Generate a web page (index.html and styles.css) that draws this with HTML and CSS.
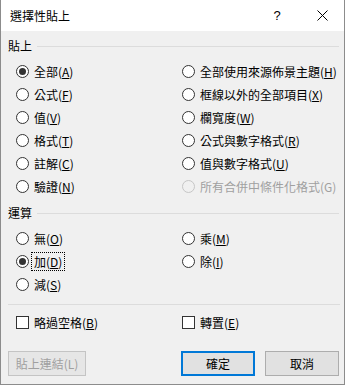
FILE: index.html
```html
<!DOCTYPE html>
<html lang="zh-TW">
<head>
    <meta charset="UTF-8">
    <meta name="viewport" content="width=device-width, initial-scale=1.0">
    <title>選擇性貼上</title>
    <link rel="stylesheet" href="styles.css">
</head>
<body>
    <div class="dialog">
        <div class="titlebar">
            <span class="title">選擇性貼上</span>
            <span class="cap help">?</span>
            <span class="cap close">
                <svg width="11" height="11" viewBox="0 0 11 11"><path d="M0.5 0.5L10.5 10.5M10.5 0.5L0.5 10.5" stroke="#000" stroke-width="1"/></svg>
            </span>
        </div>

        <div class="body">
            <div class="group-head"><span>貼上</span><span class="rule"></span></div>
            <div class="options paste">
                <label class="opt"><span class="radio checked"></span>全部(<u>A</u>)</label>
                <label class="opt"><span class="radio"></span>全部使用來源佈景主題(<u>H</u>)</label>
                <label class="opt"><span class="radio"></span>公式(<u>F</u>)</label>
                <label class="opt"><span class="radio"></span>框線以外的全部項目(<u>X</u>)</label>
                <label class="opt"><span class="radio"></span>值(<u>V</u>)</label>
                <label class="opt"><span class="radio"></span>欄寬度(<u>W</u>)</label>
                <label class="opt"><span class="radio"></span>格式(<u>T</u>)</label>
                <label class="opt"><span class="radio"></span>公式與數字格式(<u>R</u>)</label>
                <label class="opt"><span class="radio"></span>註解(<u>C</u>)</label>
                <label class="opt"><span class="radio"></span>值與數字格式(<u>U</u>)</label>
                <label class="opt"><span class="radio"></span>驗證(<u>N</u>)</label>
                <label class="opt disabled"><span class="radio"></span>所有合併中條件化格式(G)</label>
            </div>

            <div class="group-head ops-head"><span>運算</span><span class="rule"></span></div>
            <div class="options ops">
                <label class="opt"><span class="radio"></span>無(<u>O</u>)</label>
                <label class="opt"><span class="radio"></span>乘(<u>M</u>)</label>
                <label class="opt"><span class="radio checked"></span><span class="focus">加(<u>D</u>)</span></label>
                <label class="opt"><span class="radio"></span>除(<u>I</u>)</label>
                <label class="opt"><span class="radio"></span>減(<u>S</u>)</label>
            </div>

            <div class="separator"></div>

            <div class="options checks">
                <label class="opt"><span class="check"></span>略過空格(<u>B</u>)</label>
                <label class="opt"><span class="check"></span>轉置(<u>E</u>)</label>
            </div>

            <div class="buttons">
                <button class="btn link" disabled>貼上連結(L)</button>
                <button class="btn ok">確定</button>
                <button class="btn">取消</button>
            </div>
        </div>
    </div>
</body>
</html>
```

FILE: styles.css
```css
body {
    margin: 0;
    background-color: #fff;
    font-family: "Noto Sans CJK TC", "Noto Sans", sans-serif;
    font-size: 12px;
    color: #000;
}
.dialog {
    width: 345px;
    height: 385px;
    box-sizing: border-box;
    border: 1px solid #8c8c8c;
    border-top: none;
    background-color: #f0f0f0;
}
.titlebar {
    display: flex;
    align-items: center;
    height: 31px;
    background-color: #fff;
    padding-left: 9px;
}
.title {
    flex: 1;
}
.cap {
    display: flex;
    justify-content: center;
    align-items: center;
    height: 31px;
}
.help {
    width: 46px;
    font-family: "Liberation Sans", sans-serif;
    font-size: 13px;
}
.close {
    width: 44px;
}
.close svg {
    display: block;
}
.body {
    padding: 8px 5px 0 7px;
}
.group-head {
    display: flex;
    align-items: center;
    height: 14px;
    line-height: 14px;
}
.rule {
    flex: 1;
    height: 1px;
    margin-left: 5px;
    margin-top: 1px;
    background-color: #dcdcdc;
}
.options {
    display: grid;
    grid-template-columns: 166px 1fr;
    grid-auto-rows: 23px;
    padding-left: 8px;
}
.paste {
    margin-top: 7px;
}
.ops-head {
    margin-top: 8px;
}
.ops {
    margin-top: 7px;
}
.opt {
    display: flex;
    align-items: center;
    white-space: nowrap;
}
.radio {
    width: 13px;
    height: 13px;
    box-sizing: border-box;
    border: 1px solid #333;
    border-radius: 50%;
    background-color: #fff;
    margin-right: 5px;
    display: flex;
    justify-content: center;
    align-items: center;
}
.radio.checked::after {
    content: "";
    width: 7px;
    height: 7px;
    border-radius: 50%;
    background-color: #333;
}
.disabled {
    color: #a0a0a0;
}
.disabled .radio {
    border-color: #c6c6c6;
    background-color: #f0f0f0;
}
.check {
    width: 13px;
    height: 13px;
    box-sizing: border-box;
    border: 1px solid #333;
    background-color: #fff;
    margin-right: 5px;
}
.focus {
    padding: 0 2px;
    margin-left: -2px;
    outline: 1px dotted #000;
}
.separator {
    height: 1px;
    background-color: #dcdcdc;
    margin-top: 8px;
    margin-right: -1px;
}
.checks {
    margin-top: 6px;
}
.buttons {
    display: flex;
    gap: 10px;
    margin-top: 17px;
}
.btn {
    width: 74px;
    height: 25px;
    padding: 0;
    font-family: inherit;
    font-size: 12px;
    color: #000;
    background-color: #e1e1e1;
    border: 1px solid #adadad;
}
.btn.link {
    width: 78px;
    margin-right: auto;
    color: #a0a0a0;
    background-color: #e6e6e6;
    border-color: #c4c4c4;
}
.btn.ok {
    border: 2px solid #0078d7;
}
```
